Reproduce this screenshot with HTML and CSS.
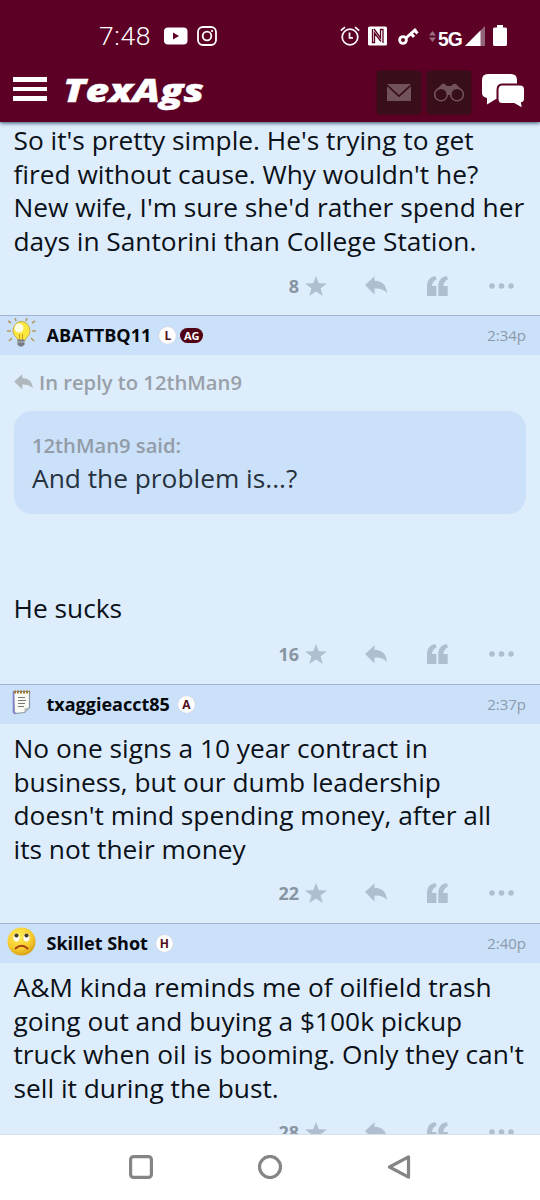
FILE: index.html
```html
<!DOCTYPE html>
<html lang="en">
<head>
<meta charset="utf-8">
<title>TexAgs</title>
<link rel="stylesheet" href="styles.css">
</head>
<body>
<svg class="defs" width="0" height="0">
  <symbol id="star" viewBox="0 0 22 20"><path d="M11 0l2.800 7.300 8.200.2-6.500 4.900 2.400 7.600L11 15.400 4.100 20l2.400-7.600L0 7.500l8.200-.2z"/></symbol>
  <symbol id="reply" viewBox="0 0 22 19"><path d="M0 9L9.500.300V4.800C17.500 5 21.500 9.500 22 17c-3-3.500-7-4.700-12.500-4.500V18.500z"/></symbol>
  <symbol id="quote" viewBox="0 0 21 20"><path d="M0 20V10C0 4.300 3.400.700 8.500 0L9.600 3.400C6.800 4.500 5.200 6.600 5 10h4.400v10z"/><path d="M11.300 20V10c0-5.700 3.400-9.300 8.500-10l1.100 3.400c-2.800 1.100-4.400 3.200-4.600 6.600h4.400v10z"/></symbol>
  <symbol id="dots" viewBox="0 0 25 6"><circle cx="3" cy="3" r="2.800"/><circle cx="12.500" cy="3" r="2.800"/><circle cx="22" cy="3" r="2.800"/></symbol>
</svg>
<div class="phone">
  <header class="top">
    <div class="status">
      <span class="clock">7:48</span>
      <svg class="yt" width="24" height="18" viewBox="0 0 24 18"><rect width="23.500" height="17" y=".5" rx="4" fill="#fff"/><path d="M9 5.500v7l6-3.500z" fill="#5c0025"/></svg>
      <svg class="ig" width="20" height="20" viewBox="0 0 20 20" fill="none" stroke="#fff" stroke-width="1.800"><rect x="1" y="1" width="18" height="18" rx="5"/><circle cx="10" cy="10" r="4.300"/><circle cx="15" cy="5" r=".7" fill="#fff" stroke-width="1"/></svg>
      <div class="right">
        <svg width="20" height="20" viewBox="0 0 20 20" fill="none" stroke="#fff" stroke-width="1.700"><circle cx="10" cy="11" r="7.800"/><path d="M.8 4.700L5 1.200M19.200 4.700L15 1.200M9.500 6.500v5.300h3.400"/></svg>
        <svg class="nfc" width="19" height="20" viewBox="0 0 19 20"><rect y=".5" width="19" height="19" rx="1.500" fill="#fff"/><path d="M4.500 3v13.500h2V7l6.500 8.500M6 3l6.500 9V3.500H15V17" stroke="#5c0025" stroke-width="1.300" fill="none"/></svg>
        <svg class="key" width="21" height="18" viewBox="0 0 21 18" fill="none" stroke="#fff"><circle cx="5" cy="13" r="3.400" stroke-width="2.800"/><path d="M8 11L18 2M13 6.500l3 3.500M16.500 3l3 3.500" stroke-width="3"/></svg>
        <svg class="updown" width="7" height="11" viewBox="0 0 7 11" fill="#987080"><path d="M0 4.500L3.500 0 7 4.500zM0 6.500h7L3.500 11z"/></svg>
        <span class="five">5G</span>
        <svg class="signal" width="20" height="20" viewBox="0 0 20 20"><path d="M0 20L20 0v20z" fill="#92647a"/><path d="M0 20L15.500 4.500V20z" fill="#fff"/></svg>
        <svg class="battery" width="14" height="21" viewBox="0 0 14 21"><path d="M4 2.500V0h6v2.500h2.500Q14 2.500 14 4v15.500q0 1.500-1.500 1.500h-11Q0 21 0 19.500V4q0-1.500 1.500-1.500z" fill="#fff"/></svg>
      </div>
    </div>
    <div class="nav">
      <div class="burger"><i></i><i></i><i></i></div>
      <svg class="logo" width="144" height="38" viewBox="0 0 144 38"><text x="-1" y="25.500" textLength="141" lengthAdjust="spacingAndGlyphs">TexAgs</text></svg>
      <div class="tile mail"><svg width="24" height="17" viewBox="0 0 24 17"><path d="M0 0h24L12 11z" fill="#72525a"/><path d="M0 2.200L12 13.300 24 2.200V17H0z" fill="#72525a"/></svg></div>
      <div class="tile"><svg width="30" height="19" viewBox="0 0 30 19"><path d="M2 7L8 1q2-1 4 1l1 1h4l1-1q2-2 4-1l6 6-9 5h-8z" fill="#72525a"/><g fill="#380f18" stroke="#72525a" stroke-width="1.600"><circle cx="7" cy="11.500" r="6.300"/><circle cx="23" cy="11.500" r="6.300"/></g><path d="M13 8h4v3h-4z" fill="#72525a"/></svg></div>
      <svg class="chat" width="43" height="35" viewBox="0 0 43 35"><path d="M6 0h23q6 0 6 6v15q0 4-6 4H14L5 30.500V24Q0 23 0 19V6Q0 0 6 0z" fill="#fff"/><path d="M20 10.500h18q5 0 5 5v9q0 4-3 4.500l1 6-9-5H20q-4.500 0-4.500-5v-9q0-5.500 4.500-5.500z" fill="#fff" stroke="#5c0025" stroke-width="2"/></svg>
    </div>
  </header>

  <main class="thread">
    <article class="post first">
      <p class="text">So it's pretty simple. He's trying to get<br>fired without cause. Why wouldn't he?<br>New wife, I'm sure she'd rather spend her<br>days in Santorini than College Station.</p>
      <div class="actions"><b>8</b><svg class="a-star"><use href="#star"/></svg><svg class="a-reply"><use href="#reply"/></svg><svg class="a-quote"><use href="#quote"/></svg><svg class="a-dots"><use href="#dots"/></svg></div>
    </article>

    <article class="post second">
      <div class="head">
        <svg class="avatar" width="30" height="30" viewBox="0 0 30 30"><g stroke="#b09b68" stroke-width="1.600"><path d="M1 3l3 2M0 13h4M2 23l3-3M8 0l1 3M19 3l1-3M25 5l3-2M25 13h4M24 20l3 3"/></g><path d="M14 3.500a9 9 0 0 1 5.500 16l-1.500 3h-7l-1.500-3A9 9 0 0 1 14 3.500z" fill="#fbe83f" stroke="#c5aa50"/><circle cx="12" cy="10" r="4.500" fill="#fffde0"/><path d="M12.500 16v6M15.500 16v6" stroke="#d19a20"/><path d="M10.500 21.500h7v5l-2 2h-3l-2-2z" fill="#747b86"/><path d="M10.500 24h7" stroke="#b8bec8"/></svg>
        <b class="user">ABATTBQ11</b><span class="badge">L</span><span class="badge ag">AG</span><time>2:34p</time>
      </div>
      <div class="inreply"><svg width="19" height="16"><use href="#reply"/></svg><span>In reply to 12thMan9</span></div>
      <blockquote><b>12thMan9 said:</b><p>And the problem is...?</p></blockquote>
      <p class="text">He sucks</p>
      <div class="actions"><b>16</b><svg class="a-star"><use href="#star"/></svg><svg class="a-reply"><use href="#reply"/></svg><svg class="a-quote"><use href="#quote"/></svg><svg class="a-dots"><use href="#dots"/></svg></div>
    </article>

    <article class="post">
      <div class="head">
        <svg class="avatar" width="30" height="30" viewBox="0 0 30 30"><path d="M6.500 4.500h16v16l-5 5-10 1z" fill="#fafaf5" stroke="#8798a8" stroke-width="1.200"/><path d="M6.500 4.500V25l2 1.500" fill="none" stroke="#8580c8" stroke-width="1.600"/><path d="M22.500 20.500l-5 5v-4z" fill="#b8bdbd"/><path d="M7 5h16" stroke="#9b7b3a" stroke-width="3.200" stroke-dasharray="2 1"/><path d="M11 10.500h7M11 13.500h8M11 16.500h7M11 19.500h6" stroke="#777" stroke-width="1.200"/></svg>
        <b class="user">txaggieacct85</b><span class="badge">A</span><time>2:37p</time>
      </div>
      <p class="text">No one signs a 10 year contract in<br>business, but our dumb leadership<br>doesn't mind spending money, after all<br>its not their money</p>
      <div class="actions"><b>22</b><svg class="a-star"><use href="#star"/></svg><svg class="a-reply"><use href="#reply"/></svg><svg class="a-quote"><use href="#quote"/></svg><svg class="a-dots"><use href="#dots"/></svg></div>
    </article>

    <article class="post">
      <div class="head">
        <svg class="avatar" width="30" height="30" viewBox="0 0 30 30"><defs><radialGradient id="face" cx=".4" cy=".3" r=".7"><stop stop-color="#ffed55"/><stop offset=".7" stop-color="#f5c92c"/><stop offset="1" stop-color="#d9a21c"/></radialGradient></defs><circle cx="14.500" cy="15.500" r="14" fill="url(#face)"/><ellipse cx="9.500" cy="11.500" rx="3" ry="4" fill="#fff"/><ellipse cx="19.500" cy="11.500" rx="3" ry="4" fill="#fff"/><circle cx="9.500" cy="9.500" r="2.100" fill="#493a25"/><circle cx="19.500" cy="9.500" r="2.100" fill="#493a25"/><path d="M8.500 22.500q6-5.500 12 0" fill="none" stroke="#a33b10" stroke-width="1.800" stroke-linecap="round"/></svg>
        <b class="user">Skillet Shot</b><span class="badge">H</span><time>2:40p</time>
      </div>
      <p class="text">A&amp;M kinda reminds me of oilfield trash<br>going out and buying a $100k pickup<br>truck when oil is booming. Only they can't<br>sell it during the bust.</p>
      <div class="actions"><b>28</b><svg class="a-star"><use href="#star"/></svg><svg class="a-reply"><use href="#reply"/></svg><svg class="a-quote"><use href="#quote"/></svg><svg class="a-dots"><use href="#dots"/></svg></div>
    </article>
  </main>

  <footer class="system">
    <svg width="24" height="24" viewBox="0 0 24 24"><rect x="1.600" y="1.600" width="20.800" height="20.800" rx="3"/></svg>
    <svg width="24" height="24" viewBox="0 0 24 24"><circle cx="12" cy="12" r="10.500"/></svg>
    <svg width="24" height="24" viewBox="0 0 24 24"><path d="M2.500 12L21.500 1.800v20.400z" stroke-linejoin="round"/></svg>
  </footer>
</div>
</body>
</html>
```
FILE: styles.css
```css
* { box-sizing: border-box; }
body { margin: 0; font-family: "Open Sans", "Noto Sans", sans-serif; background: #deedfc; }
p, blockquote { margin: 0; }
svg { flex: none; display: block; }
.defs { position: absolute; }
.phone { width: 540px; height: 1200px; display: flex; flex-direction: column; overflow: hidden; }

.top { height: 122px; flex: none; background: #5c0025; color: #fff; box-shadow: 0 1px 4px #324768; z-index: 1; }
.status { height: 72px; display: flex; align-items: center; padding-left: 99px; }
.clock { width: 65px; font: 300 26.500px/30px Roboto, sans-serif; letter-spacing: .6px; }
.yt { margin-right: 9px; }
.right { margin-left: 123px; display: flex; align-items: center; }
.nfc { margin-left: 8px; }
.key { margin-left: 11px; margin-top: -1px; }
.updown { margin-left: 10px; }
.five { margin: 5px 0 0 2px; width: 25px; font: 700 21px/22px "Liberation Sans", sans-serif; letter-spacing: -1px; transform: scaleX(.92); transform-origin: left; }
.signal { margin-left: 2px; }
.battery { margin-left: 8px; margin-top: -2px; }

.nav { height: 50px; display: flex; align-items: flex-start; padding-left: 13px; }
.burger { width: 34px; padding-top: 5px; display: flex; flex-direction: column; gap: 5px; }
.burger i { height: 4.700px; background: #fff; }
.logo { margin: 4px 0 0 17px; overflow: visible; }
.logo text { font: italic 800 32px "Open Sans", sans-serif; fill: #fff; stroke: #fff; stroke-width: .4px; }
.tile { width: 44px; height: 43px; border-radius: 3px; background: #380f18; display: flex; align-items: center; justify-content: center; margin-left: 6px; margin-top: -1px; box-shadow: 0 0 3px #380f18; }
.tile.mail { margin-left: 169px; }
.chat { margin: 2px 0 0 10.500px; }

.thread { height: 1012px; flex: none; overflow: hidden; }
.post { height: 239px; display: flex; flex-direction: column; border-top: 1.500px solid #9db5d1; background: #deedfc; }
.post.first { height: 193px; border-top: 0; }
.post.second { height: 369px; }
.head { height: 39px; flex: none; display: flex; align-items: center; padding: 0 14px 1px 6px; background: #cbe0f9; }
.avatar { margin: -5px 0 0 1px; }
.user { margin-left: 9.500px; font-size: 18px; line-height: 24px; color: #05080c; }
.badge { height: 17px; min-width: 17px; margin-left: 8px; border-radius: 9px; background: #fff; color: #501020; box-shadow: 0 0 1px #c9b9b5; font: 700 12px/17px "Open Sans", sans-serif; text-align: center; }
.badge.ag { width: 23px; margin-left: 4px; height: 15px; font-size: 11px; line-height: 15px; background: #500014; color: #fff; }
time { margin-left: auto; font-size: 15px; color: #8c9aaa; }
.text { flex: none; padding: 8px 0 0 13.500px; font-size: 26.300px; line-height: 33.600px; color: #0b1118; white-space: nowrap; }
.first .text { padding-top: 2px; }
.actions { height: 56px; flex: none; margin-top: auto; padding-bottom: 3px; display: flex; align-items: center; fill: #afbfcf; color: #8795a3; font-size: 18px; }
.first .actions { height: 56px; padding-bottom: 3px; }
.second .actions { padding-bottom: 4px; }
.post:not(.first):not(.second) .actions { height: 57px; padding-bottom: 4px; }
.actions b { width: 299px; text-align: right; }
.a-star { width: 22px; height: 20px; margin-left: 6px; }
.a-reply { width: 22px; height: 19px; margin-left: 38px; }
.a-quote { width: 21px; height: 20px; margin-left: 40px; }
.a-dots { width: 25px; height: 6px; margin-left: 41px; }
.inreply { height: 56px; padding-bottom: 3px; flex: none; display: flex; align-items: center; padding-left: 14px; gap: 6px; font-size: 20.200px; font-weight: 600; color: #98a0a8; fill: #b0b7bd; }
blockquote { height: 103px; flex: none; margin: 0 14px; padding: 20px 18px 0; border-radius: 18px; background: #cbe0f9; }
blockquote b { display: block; font-size: 20.200px; font-weight: 600; line-height: 28px; color: #929ca7; }
blockquote p { font-size: 26.300px; line-height: 38px; color: #26323e; }
.second .text { padding-top: 78px; }

.system { height: 66px; flex: none; background: #fff; border-top: 1px solid #d7e1eb; padding-bottom: 1px; display: flex; align-items: center; justify-content: center; gap: 105px; fill: none; stroke: #858585; stroke-width: 3.200px; }
```
